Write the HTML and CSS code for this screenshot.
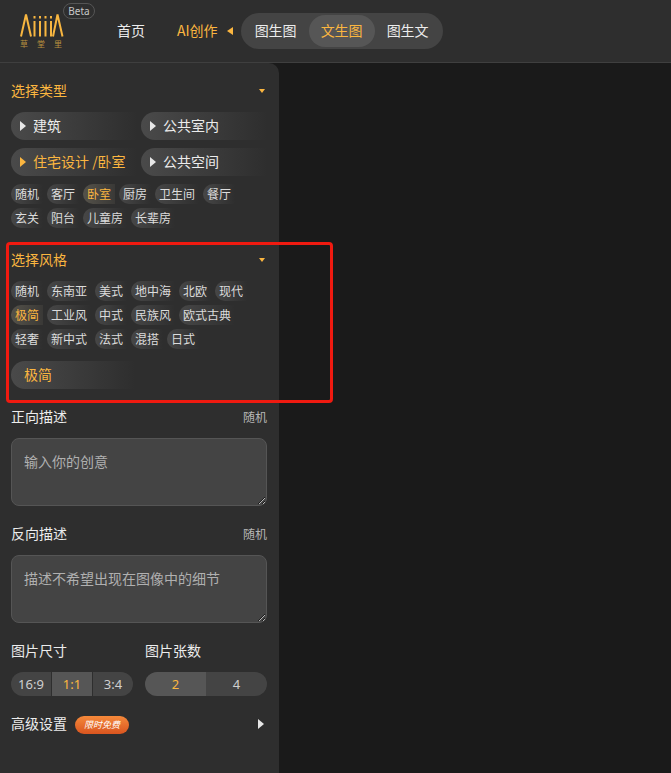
FILE: index.html
```html
<!DOCTYPE html>
<html lang="zh-CN">
<head>
    <meta charset="UTF-8">
    <meta name="viewport" content="width=device-width, initial-scale=1.0">
    <title>AI创作 - 文生图</title>
    <link rel="stylesheet" href="styles.css">
</head>
<body>

<header class="topbar">
    <div class="logo">
        <svg class="logo-mark" width="44" height="24" viewBox="0 0 44 24" fill="none" stroke="#f8b640" stroke-width="2">
            <path d="M1 23.5 L6 1.5 L11 23.5"/>
            <path d="M14.5 8V23.5M20 8V23.5M25.5 8V23.5M31 8V23.5"/>
            <path d="M14.5 3V5.5M20 3V5.5M25.5 3V5.5M31 3V5.5"/>
            <path d="M33 23.5 L37.5 1.5 L42.5 23.5"/>
        </svg>
        <div class="logo-sub"><span>草</span><span>堂</span><span>里</span></div>
        <span class="beta">Beta</span>
    </div>
    <a class="nav-link">首页</a>
    <a class="nav-link nav-active">AI创作<i class="tri-left"></i></a>
    <div class="mode-switch">
        <span class="mode">图生图</span>
        <span class="mode mode-on">文生图</span>
        <span class="mode">图生文</span>
    </div>
</header>

<div class="main">
    <aside class="sidebar">
        <!-- type -->
        <div class="sec-title"><span>选择类型</span><i class="caret"></i></div>
        <div class="type-grid">
            <div class="type-btn"><i class="tri"></i>建筑</div>
            <div class="type-btn"><i class="tri"></i>公共室内</div>
            <div class="type-btn type-on"><i class="tri"></i>住宅设计 /卧室</div>
            <div class="type-btn"><i class="tri"></i>公共空间</div>
        </div>
        <div class="chips">
            <span class="chip">随机</span>
            <span class="chip">客厅</span>
            <span class="chip chip-on">卧室</span>
            <span class="chip">厨房</span>
            <span class="chip">卫生间</span>
            <span class="chip">餐厅</span>
            <span class="chip">玄关</span>
            <span class="chip">阳台</span>
            <span class="chip">儿童房</span>
            <span class="chip">长辈房</span>
        </div>

        <!-- style -->
        <div class="sec-title style-title"><span>选择风格</span><i class="caret"></i></div>
        <div class="chips">
            <span class="chip">随机</span>
            <span class="chip">东南亚</span>
            <span class="chip">美式</span>
            <span class="chip">地中海</span>
            <span class="chip">北欧</span>
            <span class="chip">现代</span>
            <span class="chip chip-on">极简</span>
            <span class="chip">工业风</span>
            <span class="chip">中式</span>
            <span class="chip">民族风</span>
            <span class="chip">欧式古典</span>
            <span class="chip">轻奢</span>
            <span class="chip">新中式</span>
            <span class="chip">法式</span>
            <span class="chip">混搭</span>
            <span class="chip">日式</span>
        </div>
        <div class="style-current">极简</div>

        <!-- prompts -->
        <div class="field-head"><span>正向描述</span><span class="random">随机</span></div>
        <textarea class="prompt" placeholder="输入你的创意"></textarea>
        <div class="field-head"><span>反向描述</span><span class="random">随机</span></div>
        <textarea class="prompt" placeholder="描述不希望出现在图像中的细节"></textarea>

        <!-- size and count -->
        <div class="options">
            <div class="option">
                <div class="field-head">图片尺寸</div>
                <div class="seg">
                    <span>16:9</span>
                    <span class="seg-on">1:1</span>
                    <span>3:4</span>
                </div>
            </div>
            <div class="option">
                <div class="field-head">图片张数</div>
                <div class="seg seg-joined">
                    <span class="seg-on">2</span>
                    <span>4</span>
                </div>
            </div>
        </div>

        <div class="advanced">
            <span class="advanced-label">高级设置</span>
            <span class="free-badge">限时免费</span>
            <i class="tri tri-end"></i>
        </div>
    </aside>
    <div class="canvas"></div>
</div>

<div class="mark-box"></div>

</body>
</html>
```

FILE: styles.css
```css
* {
    box-sizing: border-box;
}
html, body {
    height: 100%;
}
body {
    margin: 0;
    display: flex;
    flex-direction: column;
    overflow: hidden;
    background-color: #1a1a1a;
    color: #ececec;
    font-family: "Noto Sans CJK SC", "Noto Sans", sans-serif;
    font-size: 14px;
}

/* Top bar */
.topbar {
    display: flex;
    align-items: center;
    flex: none;
    height: 63px;
    padding-bottom: 1px;
    background-color: #2e2e2e;
    border-bottom: 1px solid #3f3f3f;
}
.logo {
    position: relative;
    width: 117px;
    height: 62px;
    padding: 13px 0 0 20px;
}
.logo-mark {
    display: block;
}
.logo-sub {
    display: flex;
    justify-content: space-between;
    width: 42px;
    margin-top: 2px;
    color: #b8913f;
    font-size: 8px;
    line-height: 10px;
}
.beta {
    position: absolute;
    left: 63px;
    top: 3px;
    width: 32px;
    height: 16px;
    border: 1px solid #555;
    border-radius: 8px;
    color: #c8c8c8;
    font-family: "Noto Sans", sans-serif;
    font-size: 10px;
    line-height: 14px;
    text-align: center;
}
.nav-link {
    display: flex;
    align-items: center;
    margin-right: 32px;
    padding-bottom: 2px;
    line-height: 20px;
}
.nav-active {
    margin-right: 8px;
    color: #fbb640;
}
.tri-left {
    width: 0;
    height: 0;
    margin-left: 9px;
    margin-top: 2px;
    border-top: 4px solid transparent;
    border-bottom: 4px solid transparent;
    border-right: 6px solid #fbb640;
}
.mode-switch {
    display: flex;
    width: 202px;
    height: 36px;
    padding: 2px;
    background-color: #444;
    border-radius: 18px;
}
.mode {
    width: 66px;
    padding-bottom: 2px;
    border-radius: 16px;
    line-height: 30px;
    text-align: center;
}
.mode-on {
    background-color: #565656;
    color: #fbb640;
}

/* Sidebar */
.main {
    display: flex;
    flex: 1;
    min-height: 0;
}
.sidebar {
    flex: none;
    width: 279px;
    padding: 18px 12px 0 11px;
    background-color: #2e2e2e;
    border-top-right-radius: 10px;
}
.canvas {
    flex: 1;
}
.sec-title {
    display: flex;
    justify-content: space-between;
    align-items: flex-start;
    height: 20px;
    margin-bottom: 11px;
    color: #fbb640;
    line-height: 18px;
}
.style-title {
    margin-top: 22px;
}
.caret {
    width: 0;
    height: 0;
    margin-top: 8px;
    margin-right: 2px;
    border-left: 3px solid transparent;
    border-right: 3px solid transparent;
    border-top: 4px solid #fbb640;
}
.type-grid {
    display: grid;
    grid-template-columns: 126px 126px;
    gap: 8px 4px;
}
.type-btn {
    display: flex;
    align-items: center;
    height: 28px;
    padding-left: 9px;
    padding-bottom: 2px;
    border-radius: 14px 0 0 14px;
    background: linear-gradient(to right, #4a4a4a, rgba(74, 74, 74, 0));
    line-height: 26px;
    white-space: nowrap;
}
.type-on {
    color: #fbb640;
}
.tri {
    width: 0;
    height: 0;
    margin-top: 2px;
    margin-right: 7px;
    border-top: 5px solid transparent;
    border-bottom: 5px solid transparent;
    border-left: 6px solid #e6e6e6;
}
.type-on .tri {
    border-left-color: #fbb640;
}
.chips {
    display: flex;
    flex-wrap: wrap;
    gap: 4px;
    margin-top: 8px;
}
.style-title + .chips {
    margin-top: 0;
}
.chip {
    height: 20px;
    padding: 0 4px;
    border-radius: 10px 0 0 10px;
    background: linear-gradient(to right, #474747, rgba(71, 71, 71, 0));
    color: #dcdcdc;
    font-size: 12px;
    line-height: 20px;
}
.chip-on {
    background: linear-gradient(to right, #55524a, rgba(85, 82, 74, 0.3));
    color: #fbb640;
}
.style-current {
    width: 124px;
    height: 28px;
    margin-top: 12px;
    padding-left: 13px;
    border-radius: 14px 0 0 14px;
    background: linear-gradient(to right, #4a4a4a, rgba(74, 74, 74, 0));
    color: #fbb640;
    line-height: 26px;
}

/* Form fields */
.field-head {
    display: flex;
    justify-content: space-between;
    align-items: flex-start;
    height: 20px;
    margin-top: 18px;
    line-height: 18px;
}
.random {
    color: #b5b5b5;
    font-size: 12px;
    line-height: 20px;
}
.prompt {
    display: block;
    width: 100%;
    height: 68px;
    margin-top: 11px;
    padding: 12px 12px;
    background-color: #444;
    border: 1px solid #555;
    border-radius: 8px;
    color: #e6e6e6;
    font-family: inherit;
    font-size: 14px;
    line-height: 20px;
    outline: none;
}
.prompt::placeholder {
    color: #b0b0b0;
    opacity: 1;
}
.options {
    display: grid;
    grid-template-columns: 122px 122px;
    gap: 12px;
}
.seg {
    display: flex;
    gap: 1px;
    height: 24px;
    margin-top: 11px;
    border-radius: 12px;
    overflow: hidden;
    background-color: #2e2e2e;
}
.seg-joined {
    gap: 0;
}
.seg span {
    flex: 1;
    background-color: #444;
    color: #cfcfcf;
    font-family: "Noto Sans", sans-serif;
    font-size: 13px;
    line-height: 24px;
    text-align: center;
}
.seg .seg-on {
    background-color: #565656;
    color: #fbb640;
}
.advanced {
    display: flex;
    align-items: center;
    height: 20px;
    margin-top: 18px;
}
.advanced-label {
    height: 20px;
    line-height: 18px;
}
.free-badge {
    width: 54px;
    height: 18px;
    margin-top: 2px;
    margin-left: 8px;
    border-radius: 9px;
    background: linear-gradient(to bottom, #f5893a, #d9551f);
    color: #fff;
    font-size: 9px;
    font-style: italic;
    line-height: 18px;
    text-align: center;
}
.tri-end {
    margin-top: 0;
    margin-left: auto;
    margin-right: 3px;
}

/* Red annotation frame over the style section */
.mark-box {
    position: absolute;
    left: 6px;
    top: 242px;
    width: 327px;
    height: 161px;
    border: 3px solid #f01a10;
    border-radius: 4px;
    pointer-events: none;
}
```
